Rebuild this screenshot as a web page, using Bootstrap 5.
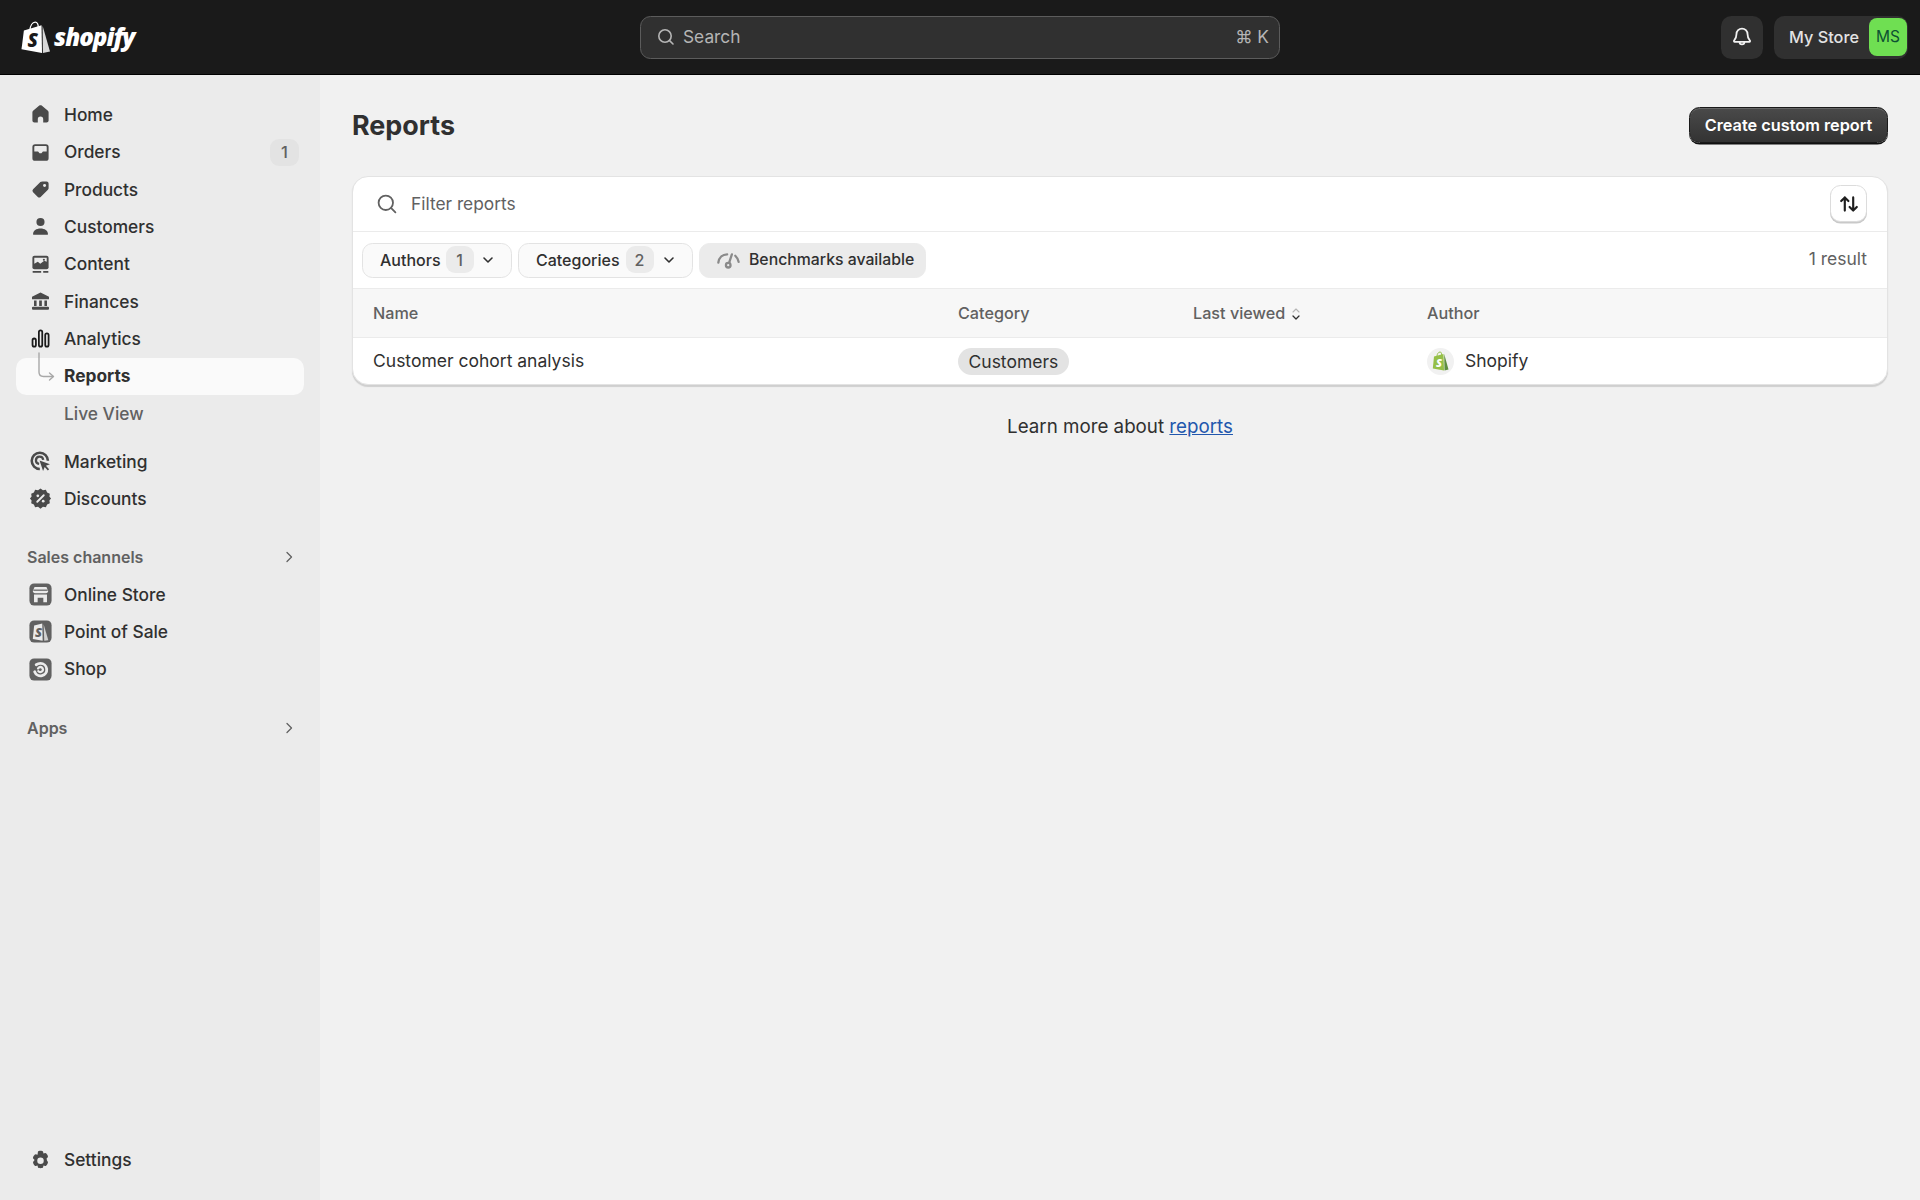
<!doctype html>
<html lang="en">
<head>
<meta charset="utf-8">
<title>Reports</title>
<link href="https://cdn.jsdelivr.net/npm/bootstrap@5.3.0/dist/css/bootstrap.min.css" rel="stylesheet">
<style>
body{font-family:Inter,"Liberation Sans",sans-serif;font-size:17.33px;color:#303030;background:#f1f1f1;height:1200px;overflow:hidden}
.topbar{height:75px;background:#1a1a1a;border-bottom:1px solid #000;padding:0 12px 0 21px;position:relative}
.logo-word{font-family:"Open Sans",sans-serif;font-weight:800;font-style:italic;font-size:24.2px;letter-spacing:-1px;color:#fff;margin-left:4px;line-height:1}
.search-box{width:640px;height:43px;background:#303030;border:1px solid #5c5c5c;border-radius:10.5px;color:#b5b5b5;padding:0 10px 1px 15px;position:absolute;left:640px;top:16px}
.search-box svg{margin-right:7px}
.search-box span.kbd-k{margin-left:auto;font-size:17.33px}
.dark-tile{background:#303030;border-radius:10.5px;height:43px;color:#e3e3e3}
.bell-tile{width:42px}
.store-tile{margin-left:11px;width:134px;padding-left:15px;font-weight:500;font-size:16.3px;white-space:nowrap}
.avatar{width:38px;height:38px;border-radius:8px;background:#6fdf52;color:#0c5132;font-size:15.5px;margin-left:auto;margin-right:1px;font-weight:400}
.side{width:320px;height:1125px;background:#ebebeb;padding:21.3px 16px 21px}
.side-link{height:37.33px;padding:0 0 0 10.5px;color:#303030;font-weight:500;border-radius:10.5px;gap:10.5px;position:relative;width:288px}
.side-link:hover{color:#303030}
.side-link svg.ico{width:27px;height:27px;flex:none}
.side-link.on{background:#fafafa;font-weight:650;color:#303030;padding-left:48px}
.side-link.sub{padding-left:48px;color:#616161}
.link-gap{margin-top:10.67px}
.side-count{position:absolute;right:5px;top:5px;width:29px;height:27px;border-radius:9px;background:#e3e3e3;color:#616161;font-weight:500;font-size:16.5px}
.connector{position:absolute;left:20px;top:-6px;width:22px;height:32px}
.side-head{height:37.33px;padding:0 5px 0 11px;color:#616161;font-weight:600;font-size:16px;margin-top:21px;width:288px}
.side-head.later{margin-top:21.5px}
.main-area{padding:0 32px;width:1600px}
.page-title{font-size:26.9px;font-weight:700;color:#303030;margin:0;line-height:1}
.title-row{height:101px}
.cta{background:linear-gradient(#4a4a4a,#333);color:#fff;border:1px solid #1a1a1a;border-radius:10.5px;height:36px;width:199px;padding:0;font-weight:600;font-size:16.3px;box-shadow:inset 0 1px 0 #666,0 1.5px 0 #111;margin-bottom:1px}
.cta:hover{color:#fff;background:#303030}
.rep-card{border:1px solid #e3e3e3;border-radius:16px;box-shadow:0 1.5px 1px #cfcfcf;overflow:hidden;height:209px;background:#fff;--bs-card-bg:#fff}
.filter-row{height:55px;padding:0 20px 0 22px;border-bottom:1px solid #ebebeb;color:#616161}
.filter-row svg.lens{margin-right:12px}
.sort-btn{width:37px;height:37px;border:1px solid #dcdcdc;border-radius:10.5px;background:#fff;padding:0;box-shadow:0 1.5px 0 #c9c9c9}
.pill-row{height:58px;border-bottom:1px solid #ebebeb;padding:1px 20px 0 9px;gap:6px}
.fpill{height:35px;border:1px solid #e3e3e3;border-radius:10.5px;background:#fafafa;color:#303030;padding:0;font-size:16px;font-weight:450}
.fpill.p-auth{width:150px;padding-left:17px}
.fpill.p-cat{width:175px;padding-left:17px}
.fpill.p-cat .num-chip{margin:-1px 5px 0 6px}
.fpill.p-bench{width:227px;background:#ebebeb;padding-left:15px;gap:7px;font-weight:500;font-size:15.8px;border-color:#ebebeb}
.num-chip{width:28px;height:27px;background:#ebebeb;border-radius:9px;color:#616161;margin:-1px 4px 0 5px}
.result-count{margin-left:auto;color:#616161;font-size:17.5px;padding-bottom:2px}
.rep-table{table-layout:fixed;margin:0;width:100%;--bs-table-bg:transparent}
.rep-table th,.rep-table td{padding:0 0 0 20px;vertical-align:middle;border:0}
.rep-table th{height:48px;background:#f7f7f7;color:#616161;font-weight:500;font-size:16.2px;border-bottom:1px solid #ebebeb}
.rep-table td{height:47px;font-size:17.5px;color:#303030;padding-top:1px}
.cat-tag{background:#e3e3e3;color:#303030;font-weight:400;font-size:17.5px;height:27px;padding:0 10.5px;border-radius:14px}
.author-ic{width:27px;height:27px;border-radius:50%;background:#f1f1f1;margin-right:11px}
.learn{margin-top:29.5px;font-size:18.75px;color:#303030;text-align:center;line-height:24px}
.learn a{color:#2257ad}
</style>
</head>
<body>
<header class="topbar d-flex align-items-center">
  <a class="d-flex align-items-center text-decoration-none" href="#">
    <svg width="29" height="32" viewBox="0 0 29 32"><path fill="#fff" d="M20.5 4.200 2.900 9.600.5 28.200 21 32z"/><path fill="#d8d8d8" d="M21.600 4.800 29 30.400 21.900 32z"/><path fill="none" stroke="#fff" stroke-width="1.300" d="M9 8.600c.4-3.500 2.200-7.400 5.200-7.400 2.200 0 3.200 2.300 3 5.200"/><text x="6.500" y="26" font-family="Open Sans,sans-serif" font-weight="800" font-style="italic" font-size="19" fill="#1a1a1a">S</text></svg>
    <span class="logo-word">shopify</span>
  </a>
  <div class="search-box d-flex align-items-center">
    <svg width="20" height="20" viewBox="0 0 20 20" fill="none" stroke="#b5b5b5" stroke-width="1.600" stroke-linecap="round"><circle cx="9" cy="9" r="6.200"/><path d="M13.600 13.600 17 17"/></svg>
    <span>Search</span>
    <span class="kbd-k">⌘ K</span>
  </div>
  <div class="d-flex align-items-center ms-auto">
    <div class="dark-tile bell-tile d-flex align-items-center justify-content-center">
      <svg width="24" height="24" viewBox="0 0 20 20" fill="none" stroke="#f1f1f1" stroke-width="1.500" stroke-linejoin="round"><path d="M10 3a4.600 4.600 0 0 0-4.600 4.600c0 3-1 4.400-2 5.400-.3.400 0 1 .4 1h12.400c.5 0 .7-.6.4-1-1-1-2-2.400-2-5.400A4.600 4.600 0 0 0 10 3z"/><path d="M8 14.200a2 2 0 0 0 4 0"/></svg>
    </div>
    <div class="dark-tile store-tile d-flex align-items-center">
      <span>My Store</span>
      <span class="avatar d-flex align-items-center justify-content-center">MS</span>
    </div>
  </div>
</header>
<div class="d-flex">
  <nav class="side d-flex flex-column nav">
    <a class="side-link d-flex align-items-center text-decoration-none" href="#"><svg class="ico" viewBox="0 0 20 20"><path fill="#4a4a4a" d="M10 3.200c.4 0 .8.100 1.100.4l4.400 3.700c.3.300.5.700.5 1.100v6.100c0 .8-.7 1.500-1.500 1.500h-2.500v-2.500a2 2 0 0 0-4 0V16H5.500C4.700 16 4 15.300 4 14.500V8.400c0-.4.200-.8.500-1.100l4.400-3.700c.3-.3.700-.4 1.100-.4z"/></svg><span>Home</span></a>
    <a class="side-link d-flex align-items-center text-decoration-none" href="#"><svg class="ico" viewBox="0 0 20 20"><path fill="#4a4a4a" d="M6 3.800h8A2 2 0 0 1 16 5.800v8.400a2 2 0 0 1-2 2H6a2 2 0 0 1-2-2V5.800a2 2 0 0 1 2-2z"/><path fill="#ebebeb" d="M6 5.200h8c.3 0 .6.300.6.600v3.500h-2.800l-1.100 1.300H9.300L8.200 9.300H5.400V5.800c0-.3.300-.6.600-.6z"/></svg><span>Orders</span><span class="side-count d-flex align-items-center justify-content-center">1</span></a>
    <a class="side-link d-flex align-items-center text-decoration-none" href="#"><svg class="ico" viewBox="0 0 20 20"><path fill="#4a4a4a" d="M11.500 4h3A1.500 1.500 0 0 1 16 5.500V9c0 .4-.2.800-.5 1.100l-5.400 5.400a1.500 1.500 0 0 1-2.100 0l-3.500-3.500a1.500 1.500 0 0 1 0-2.100l5.400-5.400c.3-.3.900-.5 1.600-.5z"/><circle cx="13" cy="7" r="1.100" fill="#ebebeb"/></svg><span>Products</span></a>
    <a class="side-link d-flex align-items-center text-decoration-none" href="#"><svg class="ico" viewBox="0 0 20 20" fill="#4a4a4a"><circle cx="10" cy="6.700" r="3"/><path d="M4.500 15.500c0-2.400 2.400-4 5.500-4s5.500 1.600 5.500 4c0 .4-.3.700-.8.700H5.300c-.5 0-.8-.3-.8-.7z"/></svg><span>Customers</span></a>
    <a class="side-link d-flex align-items-center text-decoration-none" href="#"><svg class="ico" viewBox="0 0 20 20"><rect x="4" y="3.500" width="12" height="10" rx="1.500" fill="#4a4a4a"/><path fill="#ebebeb" d="M5.400 5h9.200v3l-1.800-.8-3 2.300-1.800-1.500-2.600 1.500z"/><circle cx="12.500" cy="6.500" r=".8" fill="#4a4a4a"/><path d="M4.200 15.500h6.300M12 15.500h3.800" stroke="#4a4a4a" stroke-width="1.200"/></svg><span>Content</span></a>
    <a class="side-link d-flex align-items-center text-decoration-none" href="#"><svg class="ico" viewBox="0 0 20 20" fill="#4a4a4a"><path d="M10 3.300 16.300 6.500v1.800H3.700V6.500z"/><path d="M5.200 9.200h1.900v4.100H5.200zM9 9.200h2v4.100H9zM12.900 9.200h1.900v4.100h-1.900z"/><rect x="3.700" y="13.800" width="12.600" height="2.400" rx=".8"/></svg><span>Finances</span></a>
    <a class="side-link d-flex align-items-center text-decoration-none" href="#"><svg class="ico" viewBox="0 0 20 20" fill="none" stroke="#1a1a1a" stroke-width="1.300"><rect x="4.100" y="10" width="2.500" height="6" rx="1.250"/><rect x="8.800" y="3.900" width="2.500" height="12.100" rx="1.250"/><rect x="13.500" y="6.200" width="2.500" height="9.800" rx="1.250"/></svg><span>Analytics</span></a>
    <a class="side-link on d-flex align-items-center text-decoration-none" href="#">
      <svg class="connector" viewBox="0 0 22 32" fill="none" stroke="#a8a8a8" stroke-width="1.400" stroke-linecap="round" stroke-linejoin="round"><path d="M3 1v19c0 3 1.500 4.500 4.500 4.500H17"/><path d="M13.500 21 17.500 24.500 13.500 28"/></svg>
      <span>Reports</span></a>
    <a class="side-link sub d-flex align-items-center text-decoration-none" href="#"><span>Live View</span></a>
    <a class="side-link link-gap d-flex align-items-center text-decoration-none" href="#"><svg class="ico" viewBox="0 0 20 20" fill="none" stroke="#4a4a4a"><path stroke-width="1.900" d="M9.500 15.500a6 6 0 1 1 6-6"/><path stroke-width="1.700" d="M9 11.800a2.700 2.700 0 1 1 3-3"/><path fill="#4a4a4a" stroke="none" d="M9.300 9.300 17 12l-3 1.100 2.400 2.700-1 .9-2.300-2.700-1.200 3z"/></svg><span>Marketing</span></a>
    <a class="side-link d-flex align-items-center text-decoration-none" href="#"><svg class="ico" viewBox="0 0 20 20"><path fill="#4a4a4a" d="m10 2.500 1.800 1.300 2.200-.3.900 2 2 .9-.3 2.200L17.800 10l-1.200 1.400.3 2.200-2 .9-.9 2-2.200-.3L10 17.500l-1.800-1.300-2.200.3-.9-2-2-.9.3-2.200L2.200 10l1.200-1.400-.3-2.200 2-.9.900-2 2.200.3z"/><path stroke="#ebebeb" stroke-width="1.400" stroke-linecap="round" d="M12.400 7.600 7.600 12.400"/><circle cx="8" cy="8" r="1" fill="#ebebeb"/><circle cx="12" cy="12" r="1" fill="#ebebeb"/></svg><span>Discounts</span></a>
    <div class="side-head d-flex align-items-center justify-content-between"><span>Sales channels</span><svg width="20" height="20" viewBox="0 0 20 20" fill="none" stroke="#616161" stroke-width="1.300" stroke-linecap="round" stroke-linejoin="round"><path d="m8 5.500 4.500 4.500L8 14.500"/></svg></div>
    <a class="side-link d-flex align-items-center text-decoration-none" href="#"><svg class="ico" viewBox="0 0 20 20"><rect x="1.800" y="1.800" width="16.400" height="16.400" rx="3.500" fill="#616161"/><path fill="#ebebeb" d="M5.600 4.400h8.800l1.300 3c0 1-.8 1.600-1.600 1.600H5.900c-.8 0-1.600-.6-1.600-1.600z"/><path fill="#ebebeb" d="M5.200 10h9.600v5.800h-2.700v-3.400H7.900v3.400H5.200z"/><path stroke="#616161" stroke-width=".9" d="M4.700 6.800h10.600"/></svg><span>Online Store</span></a>
    <a class="side-link d-flex align-items-center text-decoration-none" href="#"><svg class="ico" viewBox="0 0 20 20"><rect x="1.800" y="1.800" width="16.400" height="16.400" rx="3.500" fill="#616161"/><path fill="#ebebeb" d="M11.300 4 5.300 5.600l-1 10 7.300 1.200z"/><path fill="#d0d0d0" d="m12.300 4.600 3.500 11.800-3 .4z"/><text x="6" y="14.300" font-family="Open Sans,sans-serif" font-weight="800" font-style="italic" font-size="9.500" fill="#616161">S</text></svg><span>Point of Sale</span></a>
    <a class="side-link d-flex align-items-center text-decoration-none" href="#"><svg class="ico" viewBox="0 0 20 20"><rect x="1.800" y="1.800" width="16.400" height="16.400" rx="3.500" fill="#616161"/><path fill="none" stroke="#ebebeb" stroke-width="2.100" stroke-linecap="round" d="M6.800 6.500c1-.7 2.100-1 3.200-1a4.600 4.600 0 1 1-4.300 6.200"/><path fill="none" stroke="#ebebeb" stroke-width="1.700" stroke-linecap="round" d="M8.200 9.200a1.900 1.900 0 1 1 .2 2"/></svg><span>Shop</span></a>
    <div class="side-head later d-flex align-items-center justify-content-between"><span>Apps</span><svg width="20" height="20" viewBox="0 0 20 20" fill="none" stroke="#616161" stroke-width="1.300" stroke-linecap="round" stroke-linejoin="round"><path d="m8 5.500 4.500 4.500L8 14.500"/></svg></div>
    <a class="side-link mt-auto d-flex align-items-center text-decoration-none" href="#"><svg class="ico" viewBox="0 0 20 20"><path fill="#4a4a4a" fill-rule="evenodd" d="M8.100 3.500c.3-.9 3.500-.9 3.800 0l.3 1.300 1.300-.4c.9-.2 2.500 2.500 1.900 3.200l-.9 1 .3 1.400.6.900c.6.700-1 3.400-1.900 3.200l-1.300-.4-.3 1.300c-.3.900-3.500.9-3.800 0l-.3-1.300-1.300.4c-.9.2-2.500-2.500-1.900-3.200l.9-1V9.500l-.9-1c-.6-.7 1-3.400 1.900-3.200l1.300.4zM10 7.700a2.400 2.400 0 1 0 0 4.800 2.400 2.400 0 0 0 0-4.800z"/></svg><span>Settings</span></a>
  </nav>
  <main class="main-area">
    <div class="title-row d-flex align-items-center justify-content-between">
      <h1 class="page-title">Reports</h1>
      <button class="btn cta" type="button">Create custom report</button>
    </div>
    <section class="card rep-card">
      <div class="filter-row d-flex align-items-center">
        <svg class="lens" width="24" height="24" viewBox="0 0 20 20" fill="none" stroke="#616161" stroke-width="1.500" stroke-linecap="round"><circle cx="9" cy="9" r="6"/><path d="M13.500 13.500 17 17"/></svg>
        <span>Filter reports</span>
        <button class="sort-btn ms-auto d-flex align-items-center justify-content-center" type="button" aria-label="Sort">
          <svg width="24" height="24" viewBox="0 0 20 20" fill="none" stroke="#1f1f1f" stroke-width="1.800" stroke-linecap="round" stroke-linejoin="round"><path d="M6.500 15.500V4.500M3.500 7.500l3-3 3 3M13.500 4.500v11M10.500 12.500l3 3 3-3"/></svg>
        </button>
      </div>
      <div class="pill-row d-flex align-items-center">
        <button class="btn fpill p-auth d-flex align-items-center" type="button"><span>Authors</span><span class="num-chip d-flex align-items-center justify-content-center">1</span><svg width="20" height="20" viewBox="0 0 20 20" fill="none" stroke="#303030" stroke-width="1.600" stroke-linecap="round" stroke-linejoin="round"><path d="m6 8 4 4 4-4"/></svg></button>
        <button class="btn fpill p-cat d-flex align-items-center" type="button"><span>Categories</span><span class="num-chip d-flex align-items-center justify-content-center">2</span><svg width="20" height="20" viewBox="0 0 20 20" fill="none" stroke="#303030" stroke-width="1.600" stroke-linecap="round" stroke-linejoin="round"><path d="m6 8 4 4 4-4"/></svg></button>
        <div class="fpill p-bench d-flex align-items-center">
          <svg width="27" height="27" viewBox="0 0 20 20" fill="none" stroke="#8a8a8a" stroke-width="1.700" stroke-linecap="round"><path d="M2.500 11.500C3 8 5.500 5.500 9 5.500"/><path d="M15 6.500c1.300 1.200 2.200 2.700 2.500 4.500"/><path d="m12.500 5.500-2 6"/><circle cx="9.800" cy="13.500" r="1.700"/></svg>
          <span>Benchmarks available</span>
        </div>
        <span class="result-count">1 result</span>
      </div>
      <table class="table rep-table">
        <colgroup><col style="width:585px"><col style="width:235px"><col style="width:234px"><col></colgroup>
        <thead><tr><th>Name</th><th>Category</th><th>Last viewed <svg width="12" height="16" viewBox="0 0 12 16" fill="none" stroke-linecap="round" stroke-linejoin="round"><path d="m3 6 3-3 3 3" stroke="#b5b5b5" stroke-width="1.100"/><path d="m3 10 3 3 3-3" stroke="#303030" stroke-width="1.300"/></svg></th><th>Author</th></tr></thead>
        <tbody><tr>
          <td>Customer cohort analysis</td>
          <td><span class="badge cat-tag d-inline-flex align-items-center">Customers</span></td>
          <td></td>
          <td><div class="d-flex align-items-center"><span class="author-ic d-flex align-items-center justify-content-center"><svg width="17" height="20" viewBox="0 0 17 20"><path fill="#95bf47" d="M11.500 3 2 5.500.8 17.500 12 19.500z"/><path fill="#5e8e3e" d="M12.200 3 16.500 18.500l-4 1z"/><path fill="none" stroke="#95bf47" stroke-width="1" d="M5 5c.2-2 1.300-4 3-4 1.200 0 1.700 1.200 1.700 3"/><text x="4" y="16" font-family="Open Sans,sans-serif" font-weight="800" font-style="italic" font-size="11" fill="#fff">S</text></svg></span><span>Shopify</span></div></td>
        </tr></tbody>
      </table>
    </section>
    <p class="learn">Learn more about <a href="#">reports</a></p>
  </main>
</div>
<script src="https://cdn.jsdelivr.net/npm/bootstrap@5.3.0/dist/js/bootstrap.bundle.min.js"></script>
</body>
</html>
